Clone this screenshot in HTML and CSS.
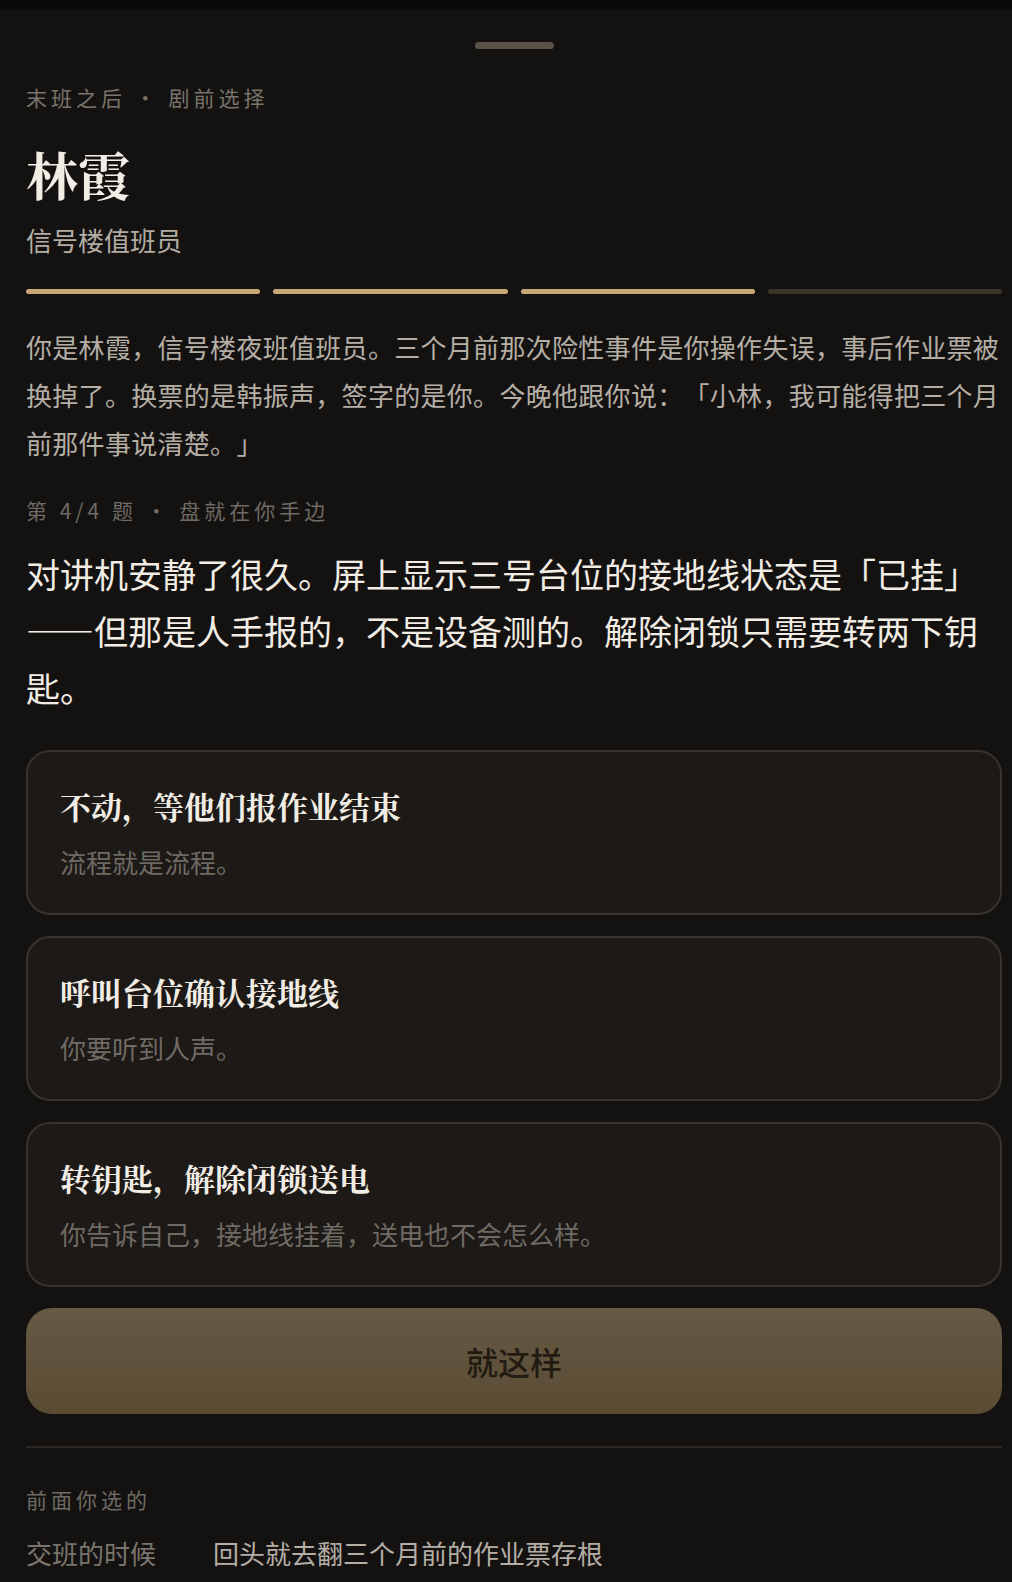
FILE: index.html
```html
<!DOCTYPE html>
<html lang="zh-CN">
<head>
<meta charset="utf-8">
<title>末班之后 · 剧前选择</title>
<link rel="stylesheet" href="styles.css">
</head>
<body>
<div class="topbar"></div>
<main class="sheet">
  <div class="handle"></div>
  <div class="eyebrow">末班之后 · 剧前选择</div>
  <h1 class="name">林霞</h1>
  <div class="role">信号楼值班员</div>
  <div class="progress">
    <span class="seg done"></span>
    <span class="seg done"></span>
    <span class="seg done"></span>
    <span class="seg"></span>
  </div>
  <p class="story">你是林霞，信号楼夜班值班员。三个月前那次险性事件是你操作失误，事后作业票被换掉了。换票的是韩振声，签字的是你。今晚他跟你说：「小林，我可能得把三个月前那件事说清楚。」</p>
  <div class="qmeta">第 4/4 题 · 盘就在你手边</div>
  <p class="question">对讲机安静了很久。屏上显示三号台位的接地线状态是「已挂」——但那是人手报的，不是设备测的。解除闭锁只需要转两下钥匙。</p>
  <div class="options">
    <div class="option">
      <div class="opt-title">不动，等他们报作业结束</div>
      <div class="opt-sub">流程就是流程。</div>
    </div>
    <div class="option">
      <div class="opt-title">呼叫台位确认接地线</div>
      <div class="opt-sub">你要听到人声。</div>
    </div>
    <div class="option">
      <div class="opt-title">转钥匙，解除闭锁送电</div>
      <div class="opt-sub">你告诉自己，接地线挂着，送电也不会怎么样。</div>
    </div>
  </div>
  <button class="confirm">就这样</button>
  <hr class="divider">
  <div class="prev-label">前面你选的</div>
  <div class="prev-row">
    <span class="prev-key">交班的时候</span>
    <span class="prev-val">回头就去翻三个月前的作业票存根</span>
  </div>
</main>
</body>
</html>
```

FILE: styles.css
```css
html, body {
  margin: 0;
  padding: 0;
  background: #141211;
}
html {
  overflow: hidden;
  scrollbar-width: none;
}
body {
  font-family: "Noto Sans CJK SC", "Noto Sans", sans-serif;
  color: #b4aea5;
  text-spacing-trim: space-all;
}
.topbar {
  height: 10px;
  background: #0b0a09;
}
.sheet {
  padding: 32px 10px 40px 26px;
}
.handle {
  width: 79px;
  height: 7px;
  border-radius: 4px;
  background: #5a5246;
  margin: 0 auto;
}
.eyebrow {
  margin-top: 33px;
  font-size: 21px;
  line-height: 30px;
  letter-spacing: 4px;
  color: #79736b;
}
.name {
  margin: 31px 0 0;
  font-family: "Noto Serif CJK SC", "Noto Sans CJK SC", serif;
  font-weight: 700;
  font-size: 52px;
  line-height: 62px;
  color: #f1ece4;
}
.role {
  margin-top: 17px;
  font-size: 26px;
  line-height: 36px;
  color: #b3ada4;
}
.progress {
  margin-top: 31px;
  display: flex;
  gap: 13px;
}
.seg {
  flex: 1;
  height: 5px;
  border-radius: 3px;
  background: #3a3329;
}
.seg.done {
  background: #c8a877;
}
.story {
  margin: 29px 0 0;
  font-size: 26px;
  letter-spacing: 0.3px;
  line-height: 48px;
  color: #b4aea5;
}
.qmeta {
  margin-top: 28px;
  font-size: 21px;
  line-height: 30px;
  letter-spacing: 4px;
  color: #6f6a63;
}
.question {
  margin: 20px 0 0;
  font-size: 34px;
  line-height: 57px;
  color: #f1ece4;
}
.options {
  margin-top: 34px;
  display: flex;
  flex-direction: column;
  gap: 21px;
}
.option {
  background: #1c1916;
  border: 2px solid #38332d;
  border-radius: 24px;
  padding: 32px 32px 32px 32px;
  display: flex;
  flex-direction: column;
  gap: 15px;
}
.opt-title {
  font-family: "Noto Serif CJK SC", "Noto Sans CJK SC", serif;
  font-weight: 700;
  font-size: 31px;
  line-height: 43px;
  color: #f1ece4;
}
.opt-sub {
  font-size: 26px;
  line-height: 39px;
  color: #6f6a63;
}
.confirm {
  display: block;
  width: 100%;
  margin-top: 21px;
  height: 106px;
  border: none;
  border-radius: 26px;
  background: linear-gradient(to bottom, #665a45, #5a4b33);
  font-family: "Noto Sans CJK SC", "Noto Sans", sans-serif;
  font-size: 32px;
  font-weight: 500;
  color: #221b12;
  padding: 0;
}
.divider {
  margin: 32px 0 0;
  border: none;
  height: 2px;
  background: #2c2825;
}
.prev-label {
  margin-top: 36px;
  font-size: 21px;
  line-height: 30px;
  letter-spacing: 4px;
  color: #6f6a63;
}
.prev-row {
  margin-top: 21px;
  display: flex;
  font-size: 26px;
  line-height: 36px;
}
.prev-key {
  width: 187px;
  flex: none;
  color: #7a746c;
}
.prev-val {
  color: #b4aea5;
}
```
